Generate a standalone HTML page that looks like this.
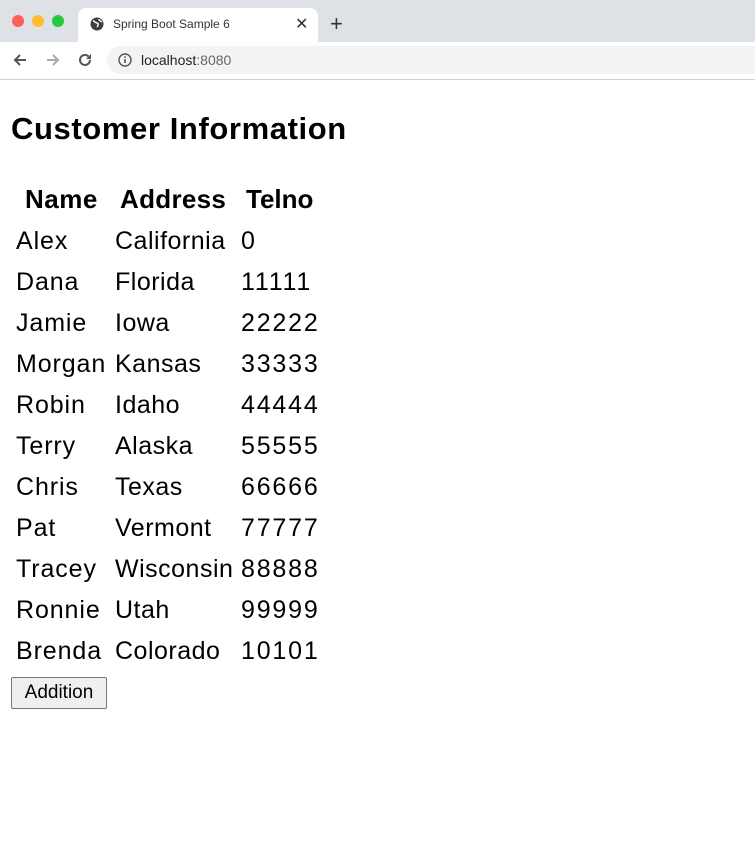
<!DOCTYPE html>
<html><head><meta charset="utf-8"><style>
body{margin:0;width:755px;height:849px;background:#fff;font-family:"Liberation Sans",sans-serif;position:relative;overflow:hidden}
.a{position:absolute;white-space:nowrap}
.top{position:absolute;left:0;top:0;width:755px;height:42px;background:#dee1e6}
.tab{position:absolute;left:78px;top:8px;width:240px;height:34px;background:#fff;border-radius:8px 8px 0 0}
.bar{position:absolute;left:0;top:42px;width:755px;height:37px;background:#fff;border-bottom:1px solid #d0d0d0}
.url{position:absolute;left:107px;top:46px;width:660px;height:28px;background:#f1f3f4;border-radius:14px}
.dot{position:absolute;top:15px;width:12px;height:12px;border-radius:50%}
.c{font-size:25px;letter-spacing:0.9px;color:#000}
.h{font-size:26px;font-weight:bold;color:#000}
</style></head><body>
<div class="top"></div>
<div class="dot" style="left:12px;background:#fe5f57"></div>
<div class="dot" style="left:32px;background:#febc2e"></div>
<div class="dot" style="left:52px;background:#28c840"></div>
<div class="tab"></div>
<svg class="a" style="left:90px;top:17px" width="14" height="14" viewBox="0 0 14 14"><circle cx="7" cy="7" r="6.5" fill="#3c4043"/><path d="M3 4c2 0 2 2 4 2s1 3 0 4M9 2c0 2 2 2 3 3" stroke="#fff" stroke-width="1.4" fill="none"/></svg>
<div class="a" style="left:113px;top:17px;font-size:12px;color:#333">Spring Boot Sample 6</div>
<div class="a" style="left:295px;top:14px;font-size:16px;color:#333">✕</div>
<div class="a" style="left:330px;top:11px;font-size:22px;color:#333">+</div>
<div class="bar"></div>
<svg class="a" style="left:12px;top:52px" width="16" height="16" viewBox="0 0 16 16"><path d="M14 8H3M8 3L3 8l5 5" stroke="#555" stroke-width="2" fill="none"/></svg>
<svg class="a" style="left:45px;top:52px" width="16" height="16" viewBox="0 0 16 16"><path d="M2 8h11M8 3l5 5-5 5" stroke="#aaa" stroke-width="2" fill="none"/></svg>
<svg class="a" style="left:77px;top:52px" width="16" height="16" viewBox="0 0 16 16"><path d="M13 8a5 5 0 1 1-1.5-3.6" stroke="#555" stroke-width="2" fill="none"/><path d="M14 2v5h-5z" fill="#555"/></svg>
<div class="url"></div>
<svg class="a" style="left:118px;top:53px" width="14" height="14" viewBox="0 0 14 14"><circle cx="7" cy="7" r="6" stroke="#555" stroke-width="1.4" fill="none"/><path d="M7 6v4" stroke="#555" stroke-width="1.6"/><circle cx="7" cy="4" r="0.9" fill="#555"/></svg>
<div class="a" style="left:141px;top:52px;font-size:14px;color:#222">localhost<span style="color:#666">:8080</span></div>

<div class="a" style="left:11px;top:111px;font-size:31px;font-weight:bold;letter-spacing:0.6px">Customer Information</div>
<div class="a h" style="left:25px;top:184px;letter-spacing:0.5px">Name</div>
<div class="a h" style="left:120px;top:184px;letter-spacing:0.3px">Address</div>
<div class="a h" style="left:246px;top:184px">Telno</div>

<div class="a c" style="left:16px;top:221px;line-height:41px">Alex<br>Dana<br>Jamie<br>Morgan<br>Robin<br>Terry<br>Chris<br>Pat<br>Tracey<br>Ronnie<br>Brenda</div>
<div class="a c" style="left:115px;top:221px;line-height:41px;letter-spacing:0.5px">California<br>Florida<br>Iowa<br>Kansas<br>Idaho<br>Alaska<br>Texas<br>Vermont<br>Wisconsin<br>Utah<br>Colorado</div>
<div class="a c" style="left:241px;top:221px;line-height:41px;letter-spacing:1.8px">0<br>11111<br>22222<br>33333<br>44444<br>55555<br>66666<br>77777<br>88888<br>99999<br>10101</div>

<div class="a" style="left:11px;top:677px;width:94px;height:30px;border:1px solid #767676;border-radius:2px;background:#efefef;font-size:19px;text-align:center;line-height:30px">Addition</div>
</body></html>
